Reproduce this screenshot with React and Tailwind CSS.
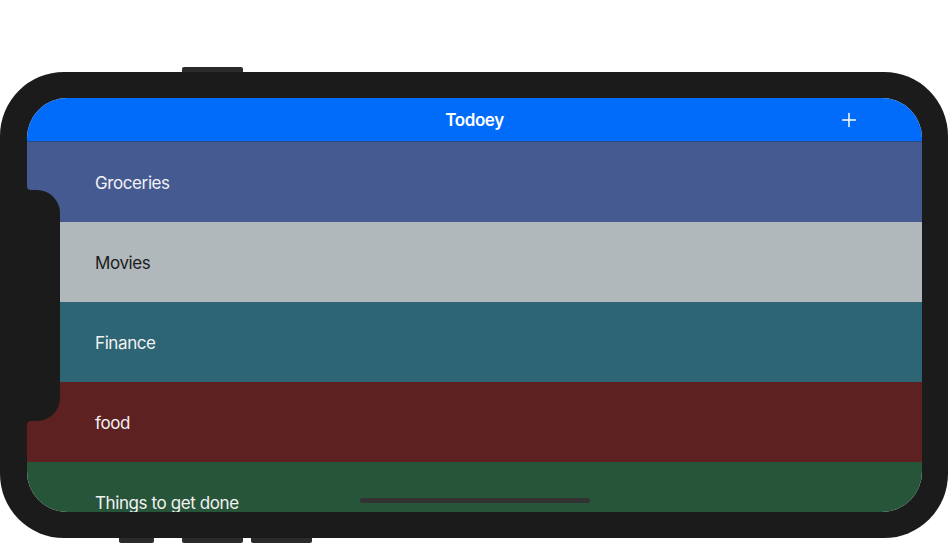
import { Plus } from 'lucide-react'

const categories = [
  { name: 'Groceries', bg: 'bg-[#455a91]', text: 'text-[#f2f2f4]' },
  { name: 'Movies', bg: 'bg-[#b1b8bb]', text: 'text-[#1c1c1e]' },
  { name: 'Finance', bg: 'bg-[#2d6575]', text: 'text-[#f2f2f4]' },
  { name: 'food', bg: 'bg-[#5e2121]', text: 'text-[#f2f2f4]' },
  { name: 'Things to get done', bg: 'bg-[#27553a]', text: 'text-[#f2f2f4]' },
]

export default function App() {
  return (
    <div className="w-[950px] h-[548px] bg-white pt-[72px] font-['Inter','Noto_Sans',sans-serif]">
      <div className="relative w-[948px] h-[466px] rounded-[64px] bg-[#1b1b1b] pl-[27px] pr-[26px] py-[26px]">
        {/* side buttons */}
        <div className="absolute left-[182px] -top-[5px] w-[61px] h-[5px] rounded-t-[2px] bg-[#2b2b2b]" />
        <div className="absolute left-[119px] -bottom-[5px] w-[35px] h-[5px] rounded-b-[2px] bg-[#2b2b2b]" />
        <div className="absolute left-[182px] -bottom-[5px] w-[61px] h-[5px] rounded-b-[2px] bg-[#2b2b2b]" />
        <div className="absolute left-[251px] -bottom-[5px] w-[61px] h-[5px] rounded-b-[2px] bg-[#2b2b2b]" />

        <div className="h-full rounded-[40px] overflow-hidden flex flex-col bg-white">
          <div className="h-[44px] shrink-0 bg-[#006cf9] border-b border-[#2c4a8a] flex items-center pl-[62px] pr-[62px]">
            <div className="flex-1" />
            <span className="text-white text-[17px] font-semibold tracking-[-0.4px] pt-[2px]">Todoey</span>
            <div className="flex-1 flex justify-end">
              <Plus className="w-[22px] h-[22px] text-white" strokeWidth={1.6} />
            </div>
          </div>
          {categories.map((c) => (
            <div key={c.name} className={`h-[80px] shrink-0 flex items-center pl-[68px] pt-[3px] ${c.bg}`}>
              <span className={`text-[17px] tracking-[-0.4px] ${c.text}`}>{c.name}</span>
            </div>
          ))}
        </div>

        {/* sensor housing */}
        <svg className="absolute left-[27px] top-[114px]" width="34" height="239" viewBox="0 0 34 239">
          <path d="M0 0 Q0 4 4 4 L10 4 A23 23 0 0 1 33 27 L33 212 A23 23 0 0 1 10 235 L4 235 Q0 235 0 239 Z" fill="#1b1b1b" />
        </svg>

        {/* home indicator */}
        <div className="absolute left-[360px] top-[426px] w-[230px] h-[5px] rounded-full bg-[#333333]" />
      </div>
    </div>
  )
}
